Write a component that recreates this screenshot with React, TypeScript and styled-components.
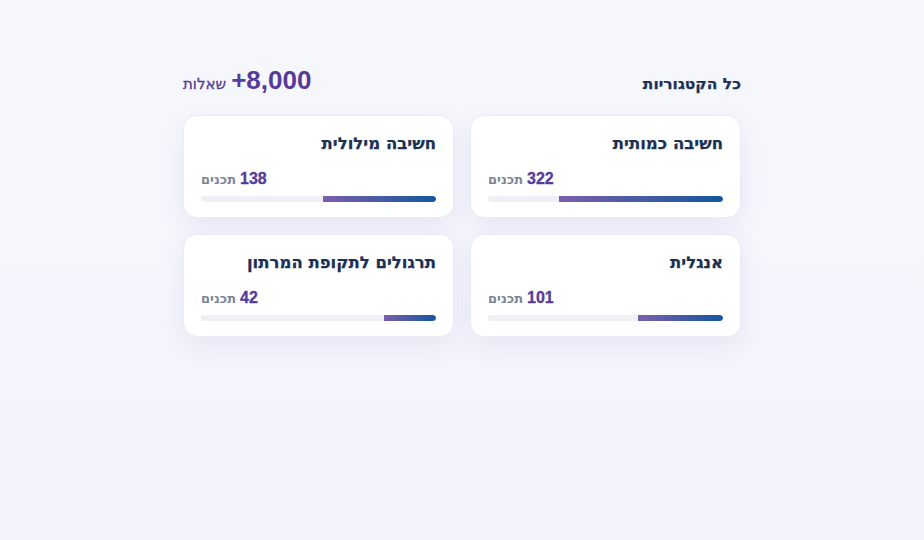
import React from "react";
import styled, { createGlobalStyle } from "styled-components";

const GlobalStyle = createGlobalStyle`
  html, body {
    margin: 0;
    padding: 0;
  }
  body {
    font-family: "Liberation Sans", Arial, sans-serif;
    background: linear-gradient(180deg, #f7f8fc 0%, #f3f2fc 100%);
    min-height: 100vh;
  }
`;

const hebrew = `"DejaVu Sans", "Liberation Sans", sans-serif`;

type Category = {
  title: string;
  count: number;
  fill: number;
};

const categories: Category[] = [
  { title: "חשיבה כמותית", count: 322, fill: 70 },
  { title: "חשיבה מילולית", count: 138, fill: 48 },
  { title: "אנגלית", count: 101, fill: 36 },
  { title: "תרגולים לתקופת המרתון", count: 42, fill: 22 },
];

const Page = styled.div`
  direction: rtl;
  min-height: 100vh;
  padding-top: 65px;
  box-sizing: border-box;
`;

const Section = styled.section`
  width: 558px;
  margin: 0 auto;
`;

const Header = styled.div`
  display: flex;
  align-items: baseline;
  justify-content: space-between;
  height: 31px;
  margin-bottom: 19px;
`;

const Title = styled.h2`
  margin: 0;
  font-family: ${hebrew};
  font-size: 15.5px;
  font-weight: 700;
  color: #1a3155;
  -webkit-text-stroke: 0.25px #1a3155;
`;

const Total = styled.div`
  display: flex;
  align-items: baseline;
  gap: 5px;
  color: #563c98;
`;

const TotalNumber = styled.span`
  font-size: 26px;
  font-weight: 700;
  direction: ltr;
`;

const TotalLabel = styled.span`
  font-family: ${hebrew};
  font-size: 15px;
  font-weight: 400;
  -webkit-text-stroke: 0.3px #563c98;
`;

const Grid = styled.div`
  display: grid;
  grid-template-columns: repeat(2, 1fr);
  gap: 16px;
`;

const Card = styled.div`
  background: #ffffff;
  border: 1px solid #ebebf4;
  border-radius: 14px;
  padding: 18px 17px 15px;
  box-shadow: 0 8px 24px rgba(110, 105, 190, 0.1);
`;

const CardTitle = styled.h3`
  margin: 0 0 16px;
  font-family: ${hebrew};
  font-size: 16.5px;
  line-height: 20px;
  font-weight: 700;
  color: #1a3155;
  -webkit-text-stroke: 0.25px #1a3155;
`;

const Meta = styled.div`
  display: flex;
  justify-content: flex-end;
  align-items: baseline;
  gap: 4px;
  height: 18px;
  line-height: 18px;
  margin-bottom: 8px;
`;

const Count = styled.span`
  font-size: 16px;
  font-weight: 700;
  color: #563c98;
  -webkit-text-stroke: 0.3px #563c98;
`;

const Unit = styled.span`
  font-family: ${hebrew};
  font-size: 13px;
  font-weight: 700;
  color: #7d8596;
`;

const Track = styled.div`
  height: 6px;
  border-radius: 3px;
  background: #efeff5;
  overflow: hidden;
`;

const Fill = styled.div`
  height: 100%;
  border-radius: 0 3px 3px 0;
  background: linear-gradient(270deg, #1456a0 0%, #7a5fa9 100%);
`;

export default function App() {
  return (
    <>
      <GlobalStyle />
      <Page>
        <Section>
          <Header>
            <Title>כל הקטגוריות</Title>
            <Total>
              <TotalNumber>+8,000</TotalNumber>
              <TotalLabel>שאלות</TotalLabel>
            </Total>
          </Header>
          <Grid>
            {categories.map((c) => (
              <Card key={c.title}>
                <CardTitle>{c.title}</CardTitle>
                <Meta>
                  <Count>{c.count}</Count>
                  <Unit>תכנים</Unit>
                </Meta>
                <Track>
                  <Fill style={{ width: `${c.fill}%` }} />
                </Track>
              </Card>
            ))}
          </Grid>
        </Section>
      </Page>
    </>
  );
}
